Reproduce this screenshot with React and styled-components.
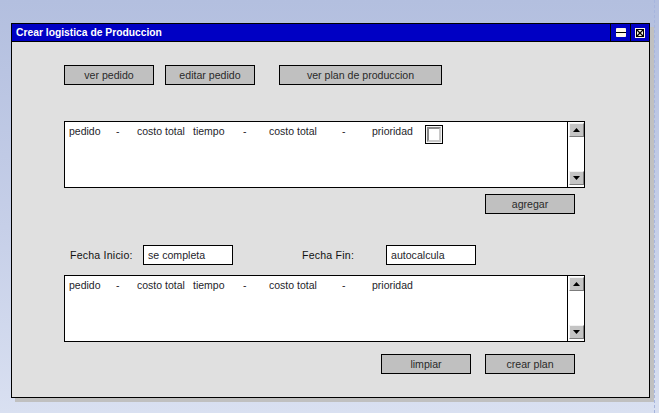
import React from "react";
import styled, { createGlobalStyle } from "styled-components";

const Global = createGlobalStyle`
  html, body { margin: 0; padding: 0; }
  body {
    width: 659px;
    height: 413px;
    overflow: hidden;
    background: linear-gradient(180deg, #b3bfdf 0%, #c6cfe8 55%, #d9e0f1 100%);
    font-family: "Liberation Sans", Arial, sans-serif;
  }
`;

const Page = styled.div`
  box-sizing: border-box;
  width: 655px;
  height: 413px;
  padding: 23px 0 0 11px;
  border-right: 1px dashed #a6b5de;
`;

const Window = styled.div`
  box-sizing: border-box;
  width: 639px;
  height: 375px;
  border: 1px solid #000;
  background: #e0e0e0;
  box-shadow: 4px 4px 0 #c0c0c0;
  display: flex;
  flex-direction: column;
`;

const TitleBar = styled.div`
  box-sizing: border-box;
  height: 18px;
  background: #0000c4;
  border-bottom: 1px solid #000;
  display: flex;
  align-items: stretch;
`;

const Title = styled.div`
  flex: 1;
  padding-left: 4px;
  color: #fff;
  font-weight: bold;
  font-size: 10.3px;
  line-height: 17px;
`;

const Ctrl = styled.div`
  box-sizing: border-box;
  width: ${(p) => p.$w}px;
  border-left: 1px solid #000;
  display: flex;
  align-items: center;
  justify-content: center;
`;

const Body = styled.div`
  flex: 1;
  padding: 23px 0 0 52px;
  display: flex;
  flex-direction: column;
`;

const Column = styled.div`
  width: 521px;
  display: flex;
  flex-direction: column;
`;

const Row = styled.div`
  display: flex;
  align-items: center;
  margin-top: ${(p) => p.$mt || 0}px;
  padding-left: ${(p) => p.$pl || 0}px;
  padding-right: ${(p) => p.$pr || 0}px;
  justify-content: ${(p) => (p.$end ? "flex-end" : "flex-start")};
`;

const Button = styled.button`
  box-sizing: border-box;
  width: ${(p) => p.$w || 90}px;
  height: 20px;
  margin: 0;
  margin-left: ${(p) => p.$ml || 0}px;
  padding: 0;
  border: 1px solid #000;
  background: #c0c0c0;
  color: #2a2a2a;
  font-family: "Liberation Sans", Arial, sans-serif;
  font-size: 10.6px;
  line-height: 18px;
  text-align: center;
`;

const List = styled.div`
  box-sizing: border-box;
  height: 67px;
  margin-top: ${(p) => p.$mt || 0}px;
  border: 1px solid #000;
  background: #fff;
  display: flex;
`;

const ListBody = styled.div`
  flex: 1;
  padding: 2px 0 0 4px;
`;

const Header = styled.div`
  display: flex;
  align-items: flex-start;
  font-size: 10.5px;
  line-height: 14px;
  color: #1e1e2a;
`;

const Cell = styled.span`
  width: ${(p) => p.$w}px;
  flex: none;
  white-space: nowrap;
`;

const Check = styled.div`
  box-sizing: border-box;
  width: 18px;
  height: 19px;
  margin-top: 1px;
  border: 1px solid #000;
  padding: 1px;
  background: #f4f4f4;
  display: flex;
`;

const CheckInner = styled.div`
  flex: 1;
  border: 2px solid;
  border-color: #8a8a8a #c8c8c8 #c8c8c8 #8a8a8a;
  background: #fff;
`;

const Scroll = styled.div`
  box-sizing: border-box;
  width: 17px;
  border-left: 1px solid #000;
  padding: 1px 1px 2px 1px;
  display: flex;
  flex-direction: column;
  justify-content: space-between;
`;

const Arrow = styled.div`
  box-sizing: border-box;
  width: 15px;
  height: 14px;
  background: #c4c4c4;
  border: 1px solid;
  border-color: #f2f2f2 #7c7c7c #7c7c7c #f2f2f2;
  display: flex;
  align-items: center;
  justify-content: center;
`;

const Label = styled.span`
  width: ${(p) => p.$w}px;
  margin-left: ${(p) => p.$ml || 0}px;
  flex: none;
  font-size: 10.6px;
  color: #111;
  letter-spacing: 0.2px;
`;

const Field = styled.div`
  box-sizing: border-box;
  width: 90px;
  height: 20px;
  border: 1px solid #000;
  background: #fff;
  padding-left: 4px;
  font-size: 10.6px;
  line-height: 18px;
  color: #1e1e2a;
`;

const Tri = ({ up }) => (
  <svg width="7" height="4" viewBox="0 0 7 4">
    <polygon points={up ? "0,4 7,4 3.5,0" : "0,0 7,0 3.5,4"} fill="#000" />
  </svg>
);

const ListBox = ({ mt, check }) => (
  <List $mt={mt}>
    <ListBody>
      <Header>
        <Cell $w={47}>pedido</Cell>
        <Cell $w={21}>-</Cell>
        <Cell $w={56}>costo total</Cell>
        <Cell $w={50}>tiempo</Cell>
        <Cell $w={26}>-</Cell>
        <Cell $w={73}>costo total</Cell>
        <Cell $w={30}>-</Cell>
        <Cell $w={53}>prioridad</Cell>
        {check && (
          <Check>
            <CheckInner />
          </Check>
        )}
      </Header>
    </ListBody>
    <Scroll>
      <Arrow>
        <Tri up />
      </Arrow>
      <Arrow>
        <Tri />
      </Arrow>
    </Scroll>
  </List>
);

export default function App() {
  return (
    <>
      <Global />
      <Page>
        <Window>
          <TitleBar>
            <Title>Crear logistica de Produccion</Title>
            <Ctrl $w={20}>
              <svg width="10" height="9" viewBox="0 0 10 9">
                <rect x="0" y="0" width="10" height="9" rx="0.8" fill="#fff8e6" />
                <line x1="0" y1="4.5" x2="10" y2="4.5" stroke="#000" strokeWidth="1" />
              </svg>
            </Ctrl>
            <Ctrl $w={19}>
              <svg width="10" height="10" viewBox="0 0 10 10">
                <rect x="0" y="0" width="10" height="10" fill="#fff8e6" />
                <rect x="1.5" y="1.5" width="7" height="7" fill="none" stroke="#000" />
                <line x1="2" y1="2" x2="8" y2="8" stroke="#000" strokeWidth="1.2" />
                <line x1="8" y1="2" x2="2" y2="8" stroke="#000" strokeWidth="1.2" />
              </svg>
            </Ctrl>
          </TitleBar>
          <Body>
            <Column>
              <Row>
                <Button>ver pedido</Button>
                <Button $ml={11}>editar pedido</Button>
                <Button $ml={24} $w={163}>ver plan de produccion</Button>
              </Row>
              <ListBox mt={36} check />
              <Row $mt={6} $end $pr={10}>
                <Button>agregar</Button>
              </Row>
              <Row $mt={31} $pl={6}>
                <Label $w={73}>Fecha Inicio:</Label>
                <Field>se completa</Field>
                <Label $w={84} $ml={69}>Fecha Fin:</Label>
                <Field>autocalcula</Field>
              </Row>
              <ListBox mt={10} />
              <Row $mt={12} $end $pr={10}>
                <Button>limpiar</Button>
                <Button $ml={14}>crear plan</Button>
              </Row>
            </Column>
          </Body>
        </Window>
      </Page>
    </>
  );
}
